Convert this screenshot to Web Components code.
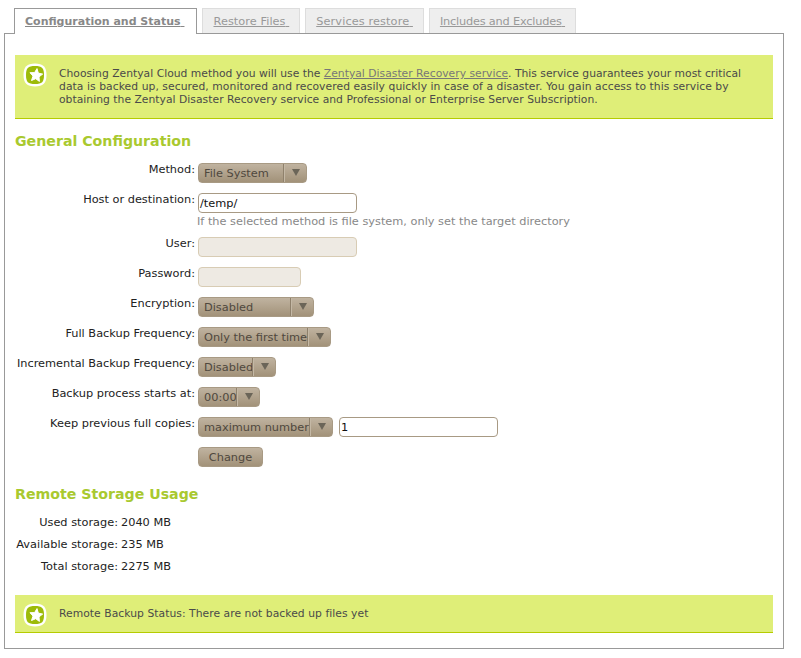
<!DOCTYPE html>
<html>
<head>
<meta charset="utf-8">
<title>Configuration and Status</title>
<style>
  html, body { margin: 0; background: #fff; }
  body { font: 11.33px "DejaVu Sans", sans-serif; color: #222; height: 658px; overflow: hidden; }
</style>
</head>
<body>
<backup-page>
  <tab-bar slot="tabs">
    <tab-item active>Configuration and Status</tab-item>
    <tab-item style="letter-spacing:.05px">Restore Files</tab-item>
    <tab-item style="letter-spacing:.1px">Services restore</tab-item>
    <tab-item style="letter-spacing:-.2px">Includes and Excludes</tab-item>
  </tab-bar>

  <note-box><span style="letter-spacing:.01px">Choosing Zentyal Cloud method you will use the <a href="#" style="color:#777">Zentyal Disaster Recovery service</a>. This service guarantees your most critical</span><br><span style="letter-spacing:.065px">data is backed up, secured, monitored and recovered easily quickly in case of a disaster. You gain access to this service by</span><br><span style="letter-spacing:.027px">obtaining the Zentyal Disaster Recovery service and Professional or Enterprise Server Subscription.</span></note-box>

  <section-title style="margin-top:13px">General Configuration</section-title>

  <form-row label="Method:" style="margin-top:13px"><select-box width="109" arrow="23">File System</select-box></form-row>
  <form-row label="Host or destination:"><text-box width="159" value="/temp/"></text-box></form-row>
  <hint-text>If the selected method is file system, only set the target directory</hint-text>
  <form-row label="User:" style="margin-top:8px"><text-box width="159" disabled></text-box></form-row>
  <form-row label="Password:"><text-box width="103" disabled></text-box></form-row>
  <form-row label="Encryption:"><select-box width="116" arrow="23">Disabled</select-box></form-row>
  <form-row label="Full Backup Frequency:"><select-box width="133" arrow="23">Only the first time</select-box></form-row>
  <form-row label="Incremental Backup Frequency:"><select-box width="78" arrow="23">Disabled</select-box></form-row>
  <form-row label="Backup process starts at:"><select-box width="62" arrow="23">00:00</select-box></form-row>
  <form-row label="Keep previous full copies:"><select-box width="135" arrow="23">maximum number</select-box><text-box width="159" value="1"></text-box></form-row>
  <form-row label=""><push-button>Change</push-button></form-row>

  <section-title style="margin-top:18px">Remote Storage Usage</section-title>

  <stat-row label="Used storage:" style="margin-top:13px">2040 MB</stat-row>
  <stat-row label="Available storage:">235 MB</stat-row>
  <stat-row label="Total storage:">2275 MB</stat-row>

  <note-box compact style="margin-top:22px;letter-spacing:.05px">Remote Backup Status: There are not backed up files yet</note-box>
</backup-page>

<script>
function define(name, css, html, init) {
  customElements.define(name, class extends HTMLElement {
    constructor() {
      super();
      this.attachShadow({mode: 'open'}).innerHTML = `<style>${css}</style>${html}`;
    }
    connectedCallback() {
      if (init) init(this, this.shadowRoot);
    }
  });
}

define('backup-page', `
  :host { display: block; padding-top: 8px; }
  .panel {
    margin: -1px 0 0 4px;
    width: 758px;
    height: 572px;
    padding: 21px 10px 21px 10px;
    border: 1px solid #999;
    background: #fff;
    display: flex;
    flex-direction: column;
  }
`, `<slot name="tabs"></slot><div class="panel"><slot></slot></div>`);

define('tab-bar', `
  :host { display: flex; align-items: flex-start; gap: 5px; padding-left: 14px; height: 26px; position: relative; z-index: 1; }
`, `<slot></slot>`);

define('tab-item', `
  :host {
    display: block;
    height: 24px;
    padding: 0 10px;
    line-height: 25px;
    background: #eee;
    border: 1px solid #ddd;
    border-bottom: 0;
    color: #999;
    text-decoration: underline;
    white-space: pre;
  }
  :host([active]) {
    height: 25px;
    padding-right: 12px;
    line-height: 26px;
    background: #fff;
    border-color: #999;
    color: #888;
    font-size: 11px;
    font-weight: bold;
  }
`, `<slot></slot> `);

define('note-box', `
  :host {
    display: flex;
    align-items: center;
    flex: none;
    height: 63px;
    background: #dfee78;
    border-bottom: 1px solid #b5cc00;
    color: #4a4a4a;
    font-size: 10.76px;
    line-height: 13px;
  }
  :host([compact]) { height: 37px; }
  svg { flex: none; align-self: flex-start; width: 24px; height: 24px; margin: 8px 12px 0 8px; }
`, `<svg viewBox="0 0 24 24">
    <path d="M12 .5C20 .5 23.5 4 23.5 12S20 23.5 12 23.5 .5 20 .5 12 4 .5 12 .5z" fill="#fff"/>
    <path d="M12 3C19 3 21 5 21 12S19 21 12 21 3 19 3 12 5 3 12 3z" fill="#9dbb09"/>
    <path d="M14 5.6l1.3 4.5 4.4 1-3.7 2.7.4 4.6-3.7-2.7-4.2 1.8 1.5-4.4-3-3.4 4.6-.1z" fill="#fff" stroke="#fff" stroke-width="1" stroke-linejoin="round"/>
  </svg><div><slot></slot></div>`);

define('section-title', `
  :host { display: block; flex: none; height: 18px; line-height: 18px; font-size: 14.16px; font-weight: bold; color: #a9c92f; }
`, `<slot></slot>`);

define('form-row', `
  :host { display: flex; flex: none; height: 20px; margin-top: 10px; }
  label { flex: none; width: 180px; padding-right: 3px; text-align: right; line-height: 13px; white-space: nowrap; }
  div { display: flex; gap: 6px; }
`, `<label></label><div><slot></slot></div>`, (el, root) => {
  root.querySelector('label').textContent = el.getAttribute('label');
});

define('select-box', `
  :host {
    display: flex;
    box-sizing: border-box;
    height: 20px;
    border: 1px solid #a89a84;
    border-radius: 4px;
    background: linear-gradient(#c0b3a0, #a29279);
    color: #4f483e;
    line-height: 19px;
    white-space: nowrap;
    overflow: hidden;
  }
  .text { flex: 1; padding-left: 5px; overflow: hidden; }
  .arrow { flex: none; display: flex; justify-content: center; padding: 5px 0 0 1px; box-sizing: border-box; border-left: 1px solid #8f816c; box-shadow: inset 1px 0 #c4b8a5; }
  svg { width: 8px; height: 7px; }
`, `<span class="text"><slot></slot></span><span class="arrow"><svg viewBox="0 0 8 7"><path d="M0 0h8L4 7z" fill="#6b6558"/></svg></span>`, (el, root) => {
  el.style.width = el.getAttribute('width') + 'px';
  root.querySelector('.arrow').style.width = el.getAttribute('arrow') + 'px';
});

define('text-box', `
  :host {
    display: block;
    box-sizing: border-box;
    height: 20px;
    padding-left: 1px;
    border: 1px solid #a89a84;
    border-radius: 4px;
    background: #fff;
    color: #111;
    line-height: 19px;
  }
  :host([disabled]) { background: #eeeae3; border-color: #d8ccb4; }
`, `<span></span>`, (el, root) => {
  el.style.width = el.getAttribute('width') + 'px';
  root.querySelector('span').textContent = el.getAttribute('value') || '';
});

define('hint-text', `
  :host { display: block; flex: none; height: 15px; margin: 1px 0 0 182px; line-height: 15px; color: #888; }
`, `<slot></slot>`);

define('push-button', `
  :host {
    display: block;
    box-sizing: border-box;
    width: 65px;
    height: 20px;
    border: 1px solid #a89a84;
    border-radius: 4px;
    background: linear-gradient(#c0b3a0, #a29279);
    color: #4f483e;
    line-height: 18px;
    text-align: center;
  }
`, `<slot></slot>`);

define('stat-row', `
  :host { display: flex; flex: none; height: 13px; margin-top: 9px; line-height: 13px; }
  label { flex: none; width: 103px; padding-right: 3px; text-align: right; white-space: nowrap; }
`, `<label></label><span><slot></slot></span>`, (el, root) => {
  root.querySelector('label').textContent = el.getAttribute('label');
});
</script>
</body>
</html>
